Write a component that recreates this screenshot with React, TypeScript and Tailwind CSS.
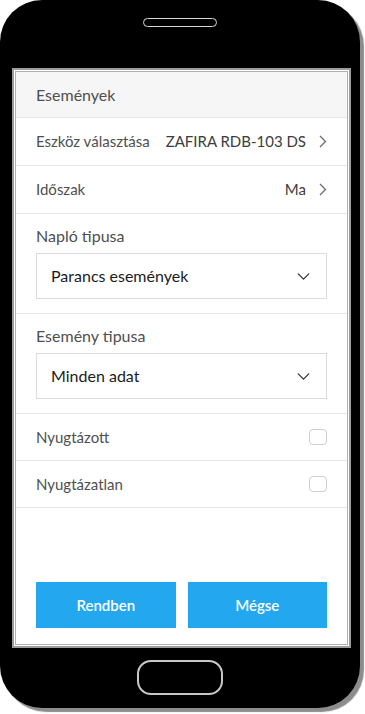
import { ChevronDown } from 'lucide-react';

const font = { fontFamily: 'Lato, "Noto Sans", sans-serif' };

const RightChevron = () => (
  <svg width="8" height="13" viewBox="0 0 8 13" fill="none" className="ml-[13px] shrink-0">
    <path d="M1 1l5.5 5.5L1 12" stroke="#6b6b6b" strokeWidth="1.3" />
  </svg>
);

const NavRow = ({ label, value }: { label: string; value: string }) => (
  <div className="flex items-center justify-between h-[48px] px-5 border-b border-[#e6e6e6] text-[15px]">
    <span className="text-[#4f4f4f]">{label}</span>
    <div className="flex items-center">
      <span className="text-[#3c3c3c]">{value}</span>
      <RightChevron />
    </div>
  </div>
);

const SelectBlock = ({ label, value }: { label: string; value: string }) => (
  <div className="px-5 pt-[11px] pb-[14px] border-b border-[#e6e6e6]">
    <div className="text-[16px] text-[#4f4f4f] leading-[22px]">{label}</div>
    <div className="mt-[6px] h-[46px] border border-[#dcdcdc] flex items-center justify-between pl-[14px] pr-[12px]">
      <span className="text-[16px] text-[#1c1c1c]">{value}</span>
      <ChevronDown size={21} strokeWidth={1.5} color="#333" />
    </div>
  </div>
);

const CheckRow = ({ label }: { label: string }) => (
  <div className="flex items-center justify-between h-[47px] px-5 border-b border-[#e6e6e6] text-[15px]">
    <span className="text-[#4f4f4f]">{label}</span>
    <div className="w-[18px] h-[16px] rounded-[4px] border border-[#cfcfcf] bg-white" />
  </div>
);

export default function App() {
  return (
    <div className="w-[365px] h-[714px] bg-white" style={font}>
      <div className="w-[360px] h-[708px] bg-black rounded-[42px] shadow-[4px_4px_1px_#8c8c8c] flex flex-col">
        <div className="h-[68px] flex justify-center pt-[18px]">
          <div className="w-[74px] h-[9px] rounded-full border-[1.5px] border-[#d8d8d8]" />
        </div>
        <div className="ml-[12px] w-[339px] h-[580px] border-2 border-[#9c9c9c]">
          <div className="h-full border border-white">
            <div className="h-full border border-[#b0b0b0] bg-white flex flex-col">
              <div className="h-[46px] bg-[#f6f6f6] border-b border-[#e6e6e6] flex items-center px-5 text-[16px] text-[#4f4f4f]">
                Események
              </div>
              <NavRow label="Eszköz választása" value="ZAFIRA RDB-103 DS" />
              <NavRow label="Időszak" value="Ma" />
              <SelectBlock label="Napló tipusa" value="Parancs események" />
              <SelectBlock label="Esemény tipusa" value="Minden adat" />
              <CheckRow label="Nyugtázott" />
              <CheckRow label="Nyugtázatlan" />
              <div className="mt-auto grid grid-cols-2 gap-3 px-5 pb-4">
                <button className="h-[46px] bg-[#23a7ef] text-white text-[15px] font-semibold">Rendben</button>
                <button className="h-[46px] bg-[#23a7ef] text-white text-[15px] font-semibold">Mégse</button>
              </div>
            </div>
          </div>
        </div>
        <div className="flex-1 flex items-center justify-center pb-[2px]">
          <div className="w-[86px] h-[35px] rounded-[14px] border-2 border-[#c8c8c8]" />
        </div>
      </div>
    </div>
  );
}
